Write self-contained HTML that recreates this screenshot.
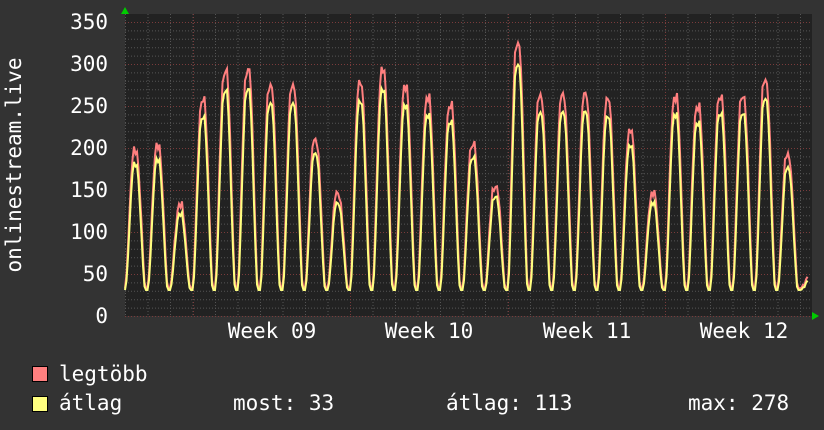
<!DOCTYPE html>
<html><head><meta charset="utf-8"><style>
body{margin:0;background:#333333;width:824px;height:430px;overflow:hidden}
svg{display:block}
text{font-family:"DejaVu Sans Mono","Liberation Mono",monospace;font-size:21px;fill:#ffffff}
</style></head><body>
<svg id="s" width="824" height="430" xmlns="http://www.w3.org/2000/svg">
<rect width="824" height="430" fill="#333333"/>
<rect x="125" y="14" width="687" height="302" fill="#222222"/>
<g id="grid"></g>
<g id="lines"></g>
<polygon points="121,14 129,14 125,7" fill="#00cc00"/>
<polygon points="812,312 812,320 819,316" fill="#00cc00"/>
<g text-anchor="end">
<text x="108" y="29">350</text><text x="108" y="71">300</text><text x="108" y="113">250</text>
<text x="108" y="155">200</text><text x="108" y="197">150</text><text x="108" y="239">100</text>
<text x="108" y="281">50</text><text x="108" y="323">0</text>
</g>
<text transform="translate(21,165) rotate(-90)" text-anchor="middle">onlinestream.live</text>
<g text-anchor="middle">
<text x="272" y="338">Week 09</text><text x="429" y="338">Week 10</text>
<text x="587" y="338">Week 11</text><text x="744" y="338">Week 12</text>
</g>
<rect x="32.5" y="366.5" width="15" height="15" fill="#ff7f7f" stroke="#000"/>
<rect x="32.5" y="396.5" width="15" height="15" fill="#ffff7f" stroke="#000"/>
<text x="59" y="381">legtöbb</text>
<text x="59" y="410">átlag</text>
<text x="233" y="410">most: 33</text>
<text x="446" y="410">átlag: 113</text>
<text x="688" y="410">max: 278</text>
</svg>
<script>
var ns="http://www.w3.org/2000/svg";
var g=document.getElementById('grid'),L=document.getElementById('lines');
function ln(x1,y1,x2,y2,c,d){var e=document.createElementNS(ns,'line');e.setAttribute('x1',x1);e.setAttribute('y1',y1);e.setAttribute('x2',x2);e.setAttribute('y2',y2);e.setAttribute('stroke',c);e.setAttribute('stroke-width',1);if(d)e.setAttribute('stroke-dasharray',d);g.appendChild(e);}
for(var v=0;v<=350;v+=10){var y=316-v*0.84+0.5;ln(125,y,812,y,v%50==0?'#7a3b3b':'#555555','1,2');}
for(var x=125.5;x<812;x+=22.5){ln(x,14,x,316,'#555555','1,2');}
[193.5,350.5,508.5,665.5].forEach(function(x){ln(x,14,x,316,'#7a3b3b','1,2');});
var peaks=[195,200,130,255,290,293,275,275,210,145,275,290,270,258,250,205,155,325,262,262,262,255,218,145,260,250,262,262,280,190,45];
var start=124,day=22.5;
var rp=[],yp=[];
function shape(ph){var c=Math.max(0,Math.cos((ph-0.5)*Math.PI*1.15));return Math.min(1,Math.pow(c,1.3)*1.08);}
for(var x=125;x<=808;x+=1.5){
 var t=(x-start)/day;var i=Math.floor(t);var ph=t-i;
 var p=peaks[Math.min(i,peaks.length-1)];
 var f=shape(ph);
 var n=Math.sin(x*1.7)*4+Math.sin(x*0.53)*3;
 var r=33+(p-33)*f+n*f;
 var yy=31+(p*0.92-31)*Math.pow(f,1.15)+n*0.6*f;
 rp.push(x+','+(316-r*0.84).toFixed(1));yp.push(x+','+(316-yy*0.84).toFixed(1));
}
function pl(pts,c){var e=document.createElementNS(ns,'polyline');e.setAttribute('points',pts.join(' '));e.setAttribute('fill','none');e.setAttribute('stroke',c);e.setAttribute('stroke-width',2);L.appendChild(e);}
pl(rp,'#ff7f7f');pl(yp,'#ffff7f');
</script>
</body></html>
